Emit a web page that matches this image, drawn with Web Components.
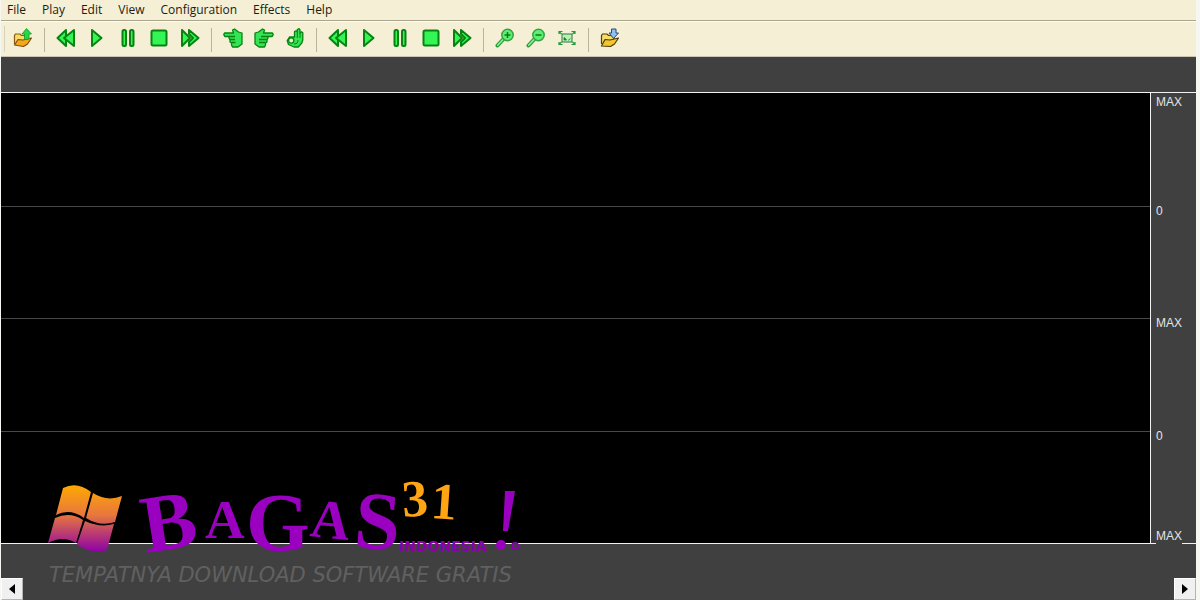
<!DOCTYPE html>
<html lang="en">
<head>
<meta charset="utf-8">
<title>Audio player</title>
<style>
  html, body {
    height: 100%;
    margin: 0;
  }
  body {
    font-family: "Open Sans", "DejaVu Sans", sans-serif;
    font-size: 12px;
    overflow: hidden;
    --face: #f4efd5;
    --face-line: #aaa58e;
    --panel: #404040;
    --line: #f2f2f2;
  }
</style>
</head>
<body>
<player-window>
  <menu-bar slot="menu">
    <menu-entry>File</menu-entry>
    <menu-entry>Play</menu-entry>
    <menu-entry>Edit</menu-entry>
    <menu-entry>View</menu-entry>
    <menu-entry>Configuration</menu-entry>
    <menu-entry>Effects</menu-entry>
    <menu-entry>Help</menu-entry>
  </menu-bar>
  <tool-bar slot="tools">
    <tool-button icon="open" label="Open"></tool-button>
    <tool-separator></tool-separator>
    <tool-button icon="rewind" label="Rewind"></tool-button>
    <tool-button icon="play" label="Play"></tool-button>
    <tool-button icon="pause" label="Pause"></tool-button>
    <tool-button icon="stop" label="Stop"></tool-button>
    <tool-button icon="forward" label="Forward"></tool-button>
    <tool-separator></tool-separator>
    <tool-button icon="hand-left" label="Pitch left"></tool-button>
    <tool-button icon="hand-right" label="Pitch right"></tool-button>
    <tool-button icon="hand-ok" label="Reset pitch"></tool-button>
    <tool-separator></tool-separator>
    <tool-button icon="rewind" label="Rewind second track"></tool-button>
    <tool-button icon="play" label="Play second track"></tool-button>
    <tool-button icon="pause" label="Pause second track"></tool-button>
    <tool-button icon="stop" label="Stop second track"></tool-button>
    <tool-button icon="forward" label="Forward second track"></tool-button>
    <tool-separator></tool-separator>
    <tool-button icon="zoom-in" label="Zoom in"></tool-button>
    <tool-button icon="zoom-out" label="Zoom out"></tool-button>
    <tool-button icon="fit" label="Fit to window"></tool-button>
    <tool-separator></tool-separator>
    <tool-button icon="save" label="Save"></tool-button>
  </tool-bar>
  <wave-view></wave-view>
  <scroll-strip slot="scroll"></scroll-strip>
  <site-watermark slot="mark"></site-watermark>
</player-window>

<script>
// svg markup for the toolbar, all on a 20x20 grid
const green = 'fill="#35f455" stroke="#078410" stroke-width="2" stroke-linejoin="round"';
const thin = 'fill="#35e455" stroke="#078410" stroke-width="1.300" stroke-linejoin="round" stroke-linecap="round"';
const folder = `
  <path d="M1.500 16V7.500l1-1.500H7l1.500 1.500H14V12" fill="#f9dc62" stroke="#8a5a12" stroke-width="1.200"/>
  <path d="M1.500 17 5 11.500l5 .5 8.500-2-4 6-4 2.500z" fill="#f2a91e" stroke="#8a4a10" stroke-width="1.200" stroke-linejoin="round"/>`;
const lens = `
  <path d="M8.500 11 2.500 17.500" stroke="#2b9a38" stroke-width="4" stroke-linecap="round"/>
  <path d="M8 11.500 2.700 17.300" stroke="#8cf59a" stroke-width="1.500" stroke-linecap="round"/>
  <circle cx="12.500" cy="7" r="5.700" fill="#5cf070" stroke="#3aa045" stroke-width="1.500"/>`;

const icons = {
  'open': folder + '<path d="M13.500.5 18.500 6H16v5l-4.500.5V6H9z" fill="#25d944" stroke="#0c9a25" stroke-width=".8"/>',
  'save': `
    <path d="M1.500 16V7.500l1-1.500H7l1.500 1.500H14V12" fill="#f9dc62" stroke="#4d4112" stroke-width="1.200"/>
    <path d="M1.500 18 5 11.500l5 .5 8.500-2-4 6-4 2.500z" fill="#f5c62c" stroke="#4d3a0c" stroke-width="1.200" stroke-linejoin="round"/>
    <path d="M11.500 1h4.500v4h2.500l-5 5.500L9 5h2.500z" fill="#8fc0f5" stroke="#26487c"/>`,
  'rewind': `<path d="M10 2 1.500 10l8.500 8z" ${green}/><path d="M18 2 8 10l10 8z" ${green}/>`,
  'forward': `<path d="M2 2v16l8-8z" ${green}/><path d="M9 2v4l4 4-4 4v4l9.500-8z" ${green}/>`,
  'play': `<path d="M5 2v16l9.500-8z" ${green}/>`,
  'pause': `<rect x="4.500" y="2" width="3.500" height="16" rx="1.500" ${green}/><rect x="12" y="2" width="3.500" height="16" rx="1.500" ${green}/>`,
  'stop': `<rect x="2.500" y="2.500" width="15" height="15" rx="1.500" ${green}/>`,
  'hand-left': `
    <path d="M1.500 5h9L9.500 2l2-1 4 3 3.500 1v11L15 19H9.500l-1-2v-2L7 14v-2L6 10V8.500H2L.7 6.700z" ${thin}/>
    <path d="M6 8.500h6M7 11.500h5M8.500 14.500h4" stroke="#078410" stroke-width="1.300" fill="none"/>`,
  'hand-right': `
    <path d="M18.500 5h-9l1-3-2-1-4 3L1 5v11l4 3h5.500l1-2v-2l1.500-1v-2l1-2V8.500h4l1.300-1.800z" ${thin}/>
    <path d="M14 8.500H7M13 11.500H5M11.500 14.500H5" stroke="#078410" stroke-width="1.300" fill="none"/>`,
  'hand-ok': `
    <path d="M9.500 9V3.500l1.500-.7 1.300 1V1.500L14 .7l1 1.300v3l1.500-1.200 1.300 1V12l-1 3-3.500 4H9l-5.500-2.500-1.300-4L4.500 9z" ${thin}/>
    <circle cx="6.200" cy="12.500" r="2.600" fill="#f4efd5" stroke="#078410" stroke-width="1.300"/>
    <path d="M12.300 4v6M15 5v5M9 16c3 0 4-1.500 4-4" stroke="#078410" fill="none"/>`,
  'zoom-in': lens + '<path d="M9.500 7h6M12.500 4v6" stroke="#0b7a18" stroke-width="1.500"/>',
  'zoom-out': lens + '<path d="M9.500 7h6" stroke="#0b7a18" stroke-width="1.500"/>',
  'fit': `
    <rect x="5" y="6" width="10" height="8" fill="#b6f2b4" stroke="#2c7a3c"/>
    <path d="M7 12V9.500l1.500 1 1 1.500zM11 12.500l2.500-2" fill="#2c7a3c" stroke="#2c7a3c" stroke-width=".8"/>
    <path d="M2 6V3.500h3.500M18 6V3.500h-3.500M2 14v2.500h3.500M18 14v2.500h-3.500M2.500 4l2 2M17.500 4l-2 2M2.500 16l2-2M17.500 16l-2-2" fill="none" stroke="#1f9a3a" stroke-width="1.200"/>`
};

class PlayerWindow extends HTMLElement {
  constructor() {
    super();
    this.attachShadow({ mode: 'open' });
    this.shadowRoot.innerHTML = `
    <style>
      :host {
        display: block;
        height: 100%;
        box-sizing: border-box;
        padding: 0 4px 0 1px;
        background-color: #f6f6f2;
      }
      main {
        position: relative;
        display: flex;
        flex-direction: column;
        height: 100%;
        background-color: var(--panel);
      }
      .ruler {
        flex: none;
        height: 35px;
      }
    </style>
    <main>
      <slot name="menu"></slot>
      <slot name="tools"></slot>
      <div class="ruler"></div>
      <slot></slot>
      <slot name="scroll"></slot>
      <slot name="mark"></slot>
    </main>
    `;
  }
}

class MenuBar extends HTMLElement {
  constructor() {
    super();
    this.attachShadow({ mode: 'open' });
    this.shadowRoot.innerHTML = `
    <style>
      :host {
        display: block;
        flex: none;
        background-color: var(--face);
        border-bottom: 1px solid var(--face-line);
      }
      nav {
        display: flex;
        gap: 16px;
        height: 20px;
        padding-left: 6px;
      }
    </style>
    <nav><slot></slot></nav>
    `;
  }
}

class MenuEntry extends HTMLElement {
  constructor() {
    super();
    this.attachShadow({ mode: 'open' });
    this.shadowRoot.innerHTML = `
    <style>
      :host { display: block; }
      button {
        padding: 0;
        border: 0;
        background: none;
        color: #1c1b14;
        font: inherit;
        line-height: 20px;
      }
    </style>
    <button type="button"><slot></slot></button>
    `;
  }
}

class ToolBar extends HTMLElement {
  constructor() {
    super();
    this.attachShadow({ mode: 'open' });
    this.shadowRoot.innerHTML = `
    <style>
      :host {
        display: flex;
        flex: none;
        align-items: center;
        height: 34px;
        padding-left: 3px;
        background-color: var(--face);
        border-top: 1px solid #fffdf0;
        border-bottom: 1px solid #c9c5b0;
      }
      .grip {
        width: 1px;
        height: 26px;
        margin-right: 2px;
        background-color: #d6d2bb;
      }
    </style>
    <span class="grip"></span>
    <slot></slot>
    `;
  }
}

class ToolSeparator extends HTMLElement {
  constructor() {
    super();
    this.attachShadow({ mode: 'open' });
    this.shadowRoot.innerHTML = `
    <style>
      :host {
        width: 1px;
        height: 24px;
        margin: 2px 5px 0 6px;
        background-color: #b9b49b;
      }
    </style>
    `;
  }
}

class ToolButton extends HTMLElement {
  constructor() {
    super();
    this.attachShadow({ mode: 'open' });
    this.shadowRoot.innerHTML = `
    <style>
      :host { display: block; }
      button {
        display: flex;
        align-items: center;
        justify-content: center;
        width: 31px;
        height: 32px;
        padding: 0 0 2px;
        border: 0;
        background: none;
      }
    </style>
    <button type="button"></button>
    `;
  }
  connectedCallback() {
    const button = this.shadowRoot.querySelector('button');
    button.setAttribute('aria-label', this.getAttribute('label'));
    button.innerHTML = `<svg width="20" height="20" viewBox="0 0 20 20" fill="none">${icons[this.getAttribute('icon')]}</svg>`;
  }
}

// two channels, each split by its zero line, with the amplitude scale at the right
class WaveView extends HTMLElement {
  constructor() {
    super();
    this.attachShadow({ mode: 'open' });
    this.shadowRoot.innerHTML = `
    <style>
      :host {
        display: grid;
        grid-template-columns: 1fr 45px;
        flex: 1;
        border-top: 1px solid var(--line);
        border-bottom: 1px solid var(--line);
      }
      .wave, .scale {
        display: grid;
        grid-template-rows: repeat(4, 1fr);
      }
      .wave {
        background-color: #000;
        border-right: 1px solid var(--line);
      }
      .wave div + div {
        border-top: 1px solid #484848;
      }
      .scale {
        color: #e4e4e4;
        font-family: "Liberation Sans", Arial, sans-serif;
        line-height: 10px;
      }
      .scale div {
        display: flex;
        flex-direction: column;
        justify-content: space-between;
        align-items: flex-start;
        padding-left: 5px;
      }
      .scale div:first-child {
        padding-top: 4px;
      }
      .scale .floor {
        margin-bottom: -1px;
        padding-bottom: 3px;
        background-color: var(--panel);
      }
    </style>
    <div class="wave"><div></div><div></div><div></div><div></div></div>
    <div class="scale">
      <div><span>MAX</span></div>
      <div><span>0</span></div>
      <div><span>MAX</span></div>
      <div><span>0</span><span class="floor">MAX</span></div>
    </div>
    `;
  }
}

class ScrollStrip extends HTMLElement {
  constructor() {
    super();
    this.attachShadow({ mode: 'open' });
    this.shadowRoot.innerHTML = `
    <style>
      :host {
        display: flex;
        flex: none;
        justify-content: space-between;
        align-items: flex-end;
        height: 56px;
      }
      button {
        display: flex;
        align-items: center;
        justify-content: center;
        width: 22px;
        height: 22px;
        padding: 0;
        border: 1px solid #fff;
        border-right-color: #b4b4b4;
        border-bottom-color: #b4b4b4;
        background-color: #f0f0f0;
      }
    </style>
    <button type="button" aria-label="Scroll left">
      <svg width="10" height="12" viewBox="0 0 10 12"><path d="M8 1v10L2 6z"/></svg>
    </button>
    <button type="button" aria-label="Scroll right">
      <svg width="10" height="12" viewBox="0 0 10 12"><path d="M2 1v10l6-5z"/></svg>
    </button>
    `;
  }
}

class SiteWatermark extends HTMLElement {
  constructor() {
    super();
    this.attachShadow({ mode: 'open' });
    this.shadowRoot.innerHTML = `
    <style>
      :host {
        position: absolute;
        left: 44px;
        bottom: 10px;
        pointer-events: none;
      }
      svg { display: block; }
      .name {
        fill: #9a00c0;
        font-family: "Liberation Serif", "Times New Roman", serif;
        font-weight: bold;
      }
      .big { font-size: 82px; }
      .small { font-size: 55px; }
      .number {
        fill: #ffa514;
        font-size: 52px;
      }
      .country {
        fill: #8a00ac;
        font-family: "DejaVu Sans", sans-serif;
        font-size: 14px;
        font-weight: bold;
      }
      .tagline {
        fill: #606060;
        font-family: "DejaVu Sans", sans-serif;
        font-size: 21px;
        font-style: italic;
      }
    </style>
    <svg width="490" height="150" viewBox="0 -40 490 150">
      <defs>
        <linearGradient id="flag" x1="0" y1="4" x2="0" y2="72" gradientUnits="userSpaceOnUse">
          <stop offset="0" stop-color="#ffab00"/>
          <stop offset=".45" stop-color="#e8783c"/>
          <stop offset="1" stop-color="#8c00a8"/>
        </linearGradient>
      </defs>
      <g fill="url(#flag)">
        <path d="M18 8Q32 1 46 12L39 38Q25 28 11 35z"/>
        <path d="M48 13Q62 22 77 16L70 42Q55 47 41 38z"/>
        <path d="M10 38Q25 31 38 40L31 63Q18 55 3 63z"/>
        <path d="M40 41Q55 48 69 44L62 70Q45 75 32 64z"/>
      </g>
      <g class="name">
        <text class="big" x="101" y="73" transform="rotate(-9 101 73)">B</text>
        <text class="small" x="160" y="58">A</text>
        <text class="big" x="201" y="70">G</text>
        <text class="small" x="264" y="56" transform="rotate(6 264 56)">A</text>
        <text class="big" x="308" y="67" transform="rotate(4 308 67)">S</text>
        <text class="number" x="358" y="37" transform="rotate(-4 358 37)">3</text>
        <text class="number" x="385" y="38" transform="rotate(4 385 38)">1</text>
      </g>
      <text class="country" x="354" y="71">INDONESIA</text>
      <path d="M460 11h10l-7 40h-5z" fill="#9a00c0"/>
      <circle cx="456" cy="65" r="5" fill="#9a00c0"/>
      <circle cx="470" cy="66" r="3" fill="none" stroke="#8a00ac" stroke-width="2"/>
      <text class="tagline" x="4" y="102">TEMPATNYA DOWNLOAD SOFTWARE GRATIS</text>
    </svg>
    `;
  }
}

customElements.define('player-window', PlayerWindow);
customElements.define('menu-bar', MenuBar);
customElements.define('menu-entry', MenuEntry);
customElements.define('tool-bar', ToolBar);
customElements.define('tool-separator', ToolSeparator);
customElements.define('tool-button', ToolButton);
customElements.define('wave-view', WaveView);
customElements.define('scroll-strip', ScrollStrip);
customElements.define('site-watermark', SiteWatermark);
</script>
</body>
</html>
